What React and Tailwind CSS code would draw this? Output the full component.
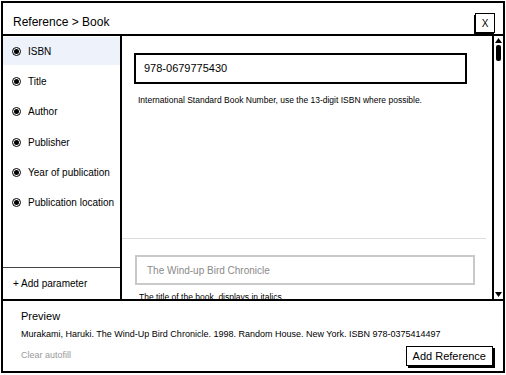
import React from 'react';

const fields = ['ISBN', 'Title', 'Author', 'Publisher', 'Year of publication', 'Publication location'];

const Radio = () => (
  <span className="w-[9px] h-[9px] rounded-full border border-black flex items-center justify-center flex-shrink-0">
    <span className="w-[5px] h-[5px] rounded-full bg-black" />
  </span>
);

const App = () => {
  return (
    <div className="w-[506px] h-[375px] bg-white pt-[1px] pl-[1px] font-['Liberation_Sans',_Arial,_sans-serif] text-black">
      <div className="w-[504px] h-[372px] border-2 border-black flex flex-col">
        {/* header */}
        <div className="h-[33px] border-b-2 border-black flex items-center justify-between pl-[10px] pr-[8px] flex-shrink-0">
          <span className="text-[12px] mt-[7px]">Reference &gt; Book</span>
          <button className="w-[20px] h-[20px] mt-[9px] border border-black bg-white text-[10px] flex items-center justify-center shadow-[-1px_2px_0_#000]">X</button>
        </div>

        {/* body */}
        <div className="h-[265px] flex border-b-2 border-black flex-shrink-0">
          <aside className="w-[119px] border-r-2 border-black flex flex-col flex-shrink-0">
            <nav className="flex-1 flex flex-col gap-[2.4px] pt-[1px]">
              {fields.map((f, i) => (
                <div key={f} className={`h-[28px] flex items-center gap-[7px] pl-[9px] text-[10px] whitespace-nowrap ${i === 0 ? 'bg-[#edf2fb]' : ''}`}>
                  <Radio />
                  <span>{f}</span>
                </div>
              ))}
            </nav>
            <div className="h-[32px] border-t border-[#444] flex items-center pl-[10px] text-[10px]">+ Add parameter</div>
          </aside>

          <main className="flex-1 flex overflow-hidden">
            <div className="flex-1 overflow-hidden flex flex-col">
              <div className="h-[203px] flex-shrink-0 pl-[12px] pr-[19px] pt-[17px] border-b border-[#ddd] mx-[6px] -ml-0">
                <div className="h-[31px] border-2 border-black flex items-center pl-[8px] text-[11px]">978-0679775430</div>
                <p className="mt-[10px] ml-[4px] text-[8.5px]">International Standard Book Number, use the 13-digit ISBN where possible.</p>
              </div>
              <div className="pl-[13px] pr-[17px] pt-[16px]">
                <div className="h-[30px] border-2 border-[#c9c9c9] flex items-center pl-[10px] text-[10px] text-[#8a8a8a]">The Wind-up Bird Chronicle</div>
                <p className="mt-[6px] ml-[4px] text-[8.5px]">The title of the book, displays in italics.</p>
              </div>
            </div>
            {/* scrollbar */}
            <div className="w-[11px] border-l-2 border-black flex flex-col items-center justify-between py-[2px] flex-shrink-0">
              <div className="flex flex-col items-center">
                <svg width="7" height="5" viewBox="0 0 7 5"><path d="M0 5 L3.5 0 L7 5 Z" fill="#000" /></svg>
                <div className="w-[5px] h-[16px] mt-[2px] rounded-[2px] bg-black" />
              </div>
              <svg width="7" height="5" viewBox="0 0 7 5"><path d="M0 0 L3.5 5 L7 0 Z" fill="#000" /></svg>
            </div>
          </main>
        </div>

        {/* footer */}
        <div className="flex-1 flex flex-col pl-[18px] pr-[10px] pt-[7px]">
          <div className="text-[11px]">Preview</div>
          <div className="mt-[3px] text-[9px]">Murakami, Haruki. The Wind-Up Bird Chronicle. 1998. Random House. New York. ISBN 978-0375414497</div>
          <div className="flex items-center justify-between mt-[5px]">
            <span className="text-[9px] text-[#999]">Clear autofill</span>
            <button className="h-[20px] px-[6px] border border-black bg-white text-[11px] shadow-[2px_2px_0_#000]">Add Reference</button>
          </div>
        </div>
      </div>
    </div>
  );
};

export default App;
